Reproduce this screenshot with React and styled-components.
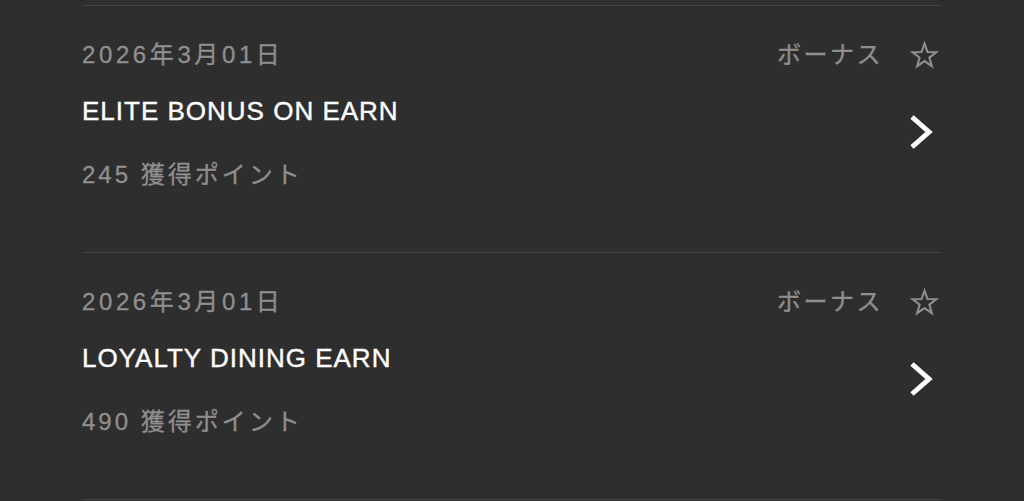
import React from 'react';
import styled, { createGlobalStyle } from 'styled-components';

const GlobalStyle = createGlobalStyle`
  html, body {
    margin: 0;
    padding: 0;
    background: #2e2e2e;
  }
  body {
    font-family: 'Liberation Sans', 'Noto Sans CJK JP', sans-serif;
    -webkit-font-smoothing: antialiased;
  }
`;

const entries = [
  { date: '2026年3月01日', type: 'ボーナス', title: 'ELITE BONUS ON EARN', points: 245 },
  { date: '2026年3月01日', type: 'ボーナス', title: 'LOYALTY DINING EARN', points: 490 },
];

const Page = styled.div`
  min-height: 501px;
  background: #2e2e2e;
  padding: 5px 82px 0;
  box-sizing: border-box;
`;

const List = styled.ul`
  list-style: none;
  margin: 0;
  padding: 0;
  border-bottom: 1px solid #444444;
`;

const Item = styled.li`
  border-top: 1px solid #444444;
  padding: 34px 0 0;
  box-sizing: border-box;
  height: 247px;
`;

const TopRow = styled.div`
  display: flex;
  justify-content: space-between;
  align-items: center;
  height: 30px;
`;

const Muted = styled.span`
  color: #8f8f8f;
  font-size: 24px;
  letter-spacing: ${(p) => p.$spacing || 3}px;
  line-height: 30px;
  -webkit-text-stroke: 0.3px #8f8f8f;
`;

const Meta = styled.div`
  display: flex;
  align-items: center;
  gap: 27px;
  padding-right: 3px;
`;

const Body = styled.div`
  display: flex;
  justify-content: space-between;
  align-items: flex-start;
  margin-top: 26px;
`;

const Info = styled.div`
  display: flex;
  flex-direction: column;
  gap: 34px;
`;

const Title = styled.h3`
  margin: 0;
  color: #ffffff;
  font-size: 26px;
  font-weight: 400;
  letter-spacing: 1px;
  line-height: 30px;
  -webkit-text-stroke: 0.4px #ffffff;
`;

const Chevron = styled.svg`
  margin-top: 16px;
  margin-right: 9px;
  flex-shrink: 0;
`;

function Star() {
  return (
    <svg width="29" height="29" viewBox="0 0 28 28">
      <polygon
        points="14,2.5 16.9,10.6 25.5,10.8 18.7,16 21.1,24.3 14,19.4 6.9,24.3 9.3,16 2.5,10.8 11.1,10.6"
        fill="none"
        stroke="#8f8f8f"
        strokeWidth="2"
        strokeLinejoin="miter"
      />
    </svg>
  );
}

function Entry({ entry }) {
  return (
    <Item>
      <TopRow>
        <Muted $spacing={3.6}>{entry.date}</Muted>
        <Meta>
          <Muted $spacing={2.5}>{entry.type}</Muted>
          <Star />
        </Meta>
      </TopRow>
      <Body>
        <Info>
          <Title>{entry.title}</Title>
          <Muted>{entry.points} 獲得ポイント</Muted>
        </Info>
        <Chevron width="26" height="40" viewBox="0 0 26 40">
          <polyline
            points="5,5 22,20 5,35"
            fill="none"
            stroke="#ffffff"
            strokeWidth="5"
          />
        </Chevron>
      </Body>
    </Item>
  );
}

export default function App() {
  return (
    <>
      <GlobalStyle />
      <Page>
        <List>
          {entries.map((entry) => (
            <Entry key={entry.title} entry={entry} />
          ))}
        </List>
      </Page>
    </>
  );
}
